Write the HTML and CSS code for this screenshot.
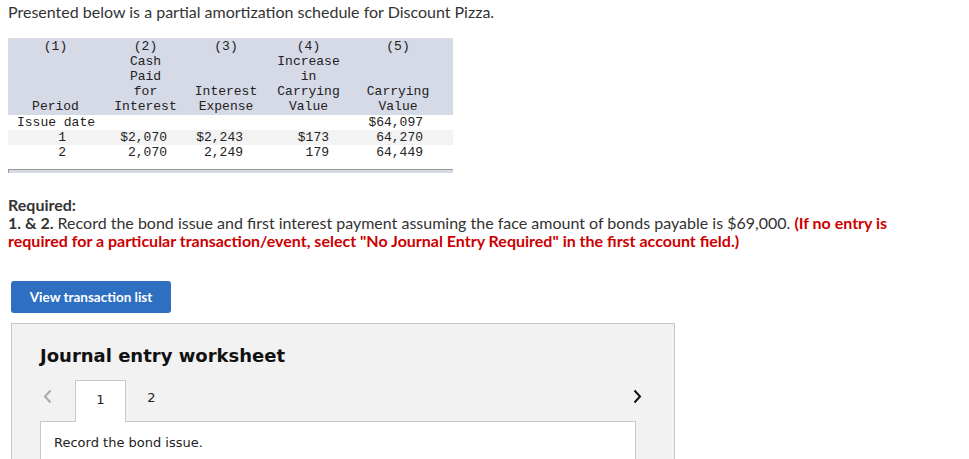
FILE: index.html
```html
<!DOCTYPE html>
<html>
<head>
<meta charset="utf-8">
<link rel="stylesheet" href="styles.css">
</head>
<body>
<p class="intro">Presented below is a partial amortization schedule for Discount Pizza.</p>
<div class="sched">
<table class="amort">
<colgroup><col class="c1"><col class="c2"><col class="c3"><col class="c4"><col class="c5"><col class="c6"></colgroup>
<thead>
<tr><th>(1)<br><br><br><br>Period</th><th>(2)<br>Cash<br>Paid<br>for<br>Interest</th><th>(3)<br><br><br>Interest<br>Expense</th><th>(4)<br>Increase<br>in<br>Carrying<br>Value</th><th>(5)<br><br><br>Carrying<br>Value</th><th></th></tr>
</thead>
<tbody>
<tr><td class="lbl">Issue date</td><td class="n2"></td><td class="n3"></td><td class="n4"></td><td class="n5">$64,097</td><td></td></tr>
<tr class="alt"><td class="per">1</td><td class="n2">$2,070</td><td class="n3">$2,243</td><td class="n4">$173</td><td class="n5">64,270</td><td></td></tr>
<tr><td class="per">2</td><td class="n2">2,070</td><td class="n3">2,249</td><td class="n4">179</td><td class="n5">64,449</td><td></td></tr>
</tbody>
</table>
<div class="sched-foot"></div>
</div>
<div class="required">
<div class="req-title">Required:</div>
<div><b>1. &amp; 2.</b> Record the bond issue and first interest payment assuming the face amount of bonds payable is $69,000. <span class="red">(If no entry is required for a particular transaction/event, select "No Journal Entry Required" in the first account field.)</span></div>
</div>
<button class="btn">View transaction list</button>
<div class="worksheet">
<h2 class="ws-title">Journal entry worksheet</h2>
<div class="nav">
<span class="arrow prev"><svg width="9" height="15" viewBox="0 0 9 15"><path d="M7.5 1.5 L2 7.5 L7.5 13.5" fill="none" stroke="#a9a9a9" stroke-width="2"/></svg></span>
<div class="tabs"><span class="tab active">1</span><span class="tab">2</span></div>
<span class="arrow next"><svg width="9" height="15" viewBox="0 0 9 15"><path d="M1.5 1.5 L7 7.5 L1.5 13.5" fill="none" stroke="#111" stroke-width="2"/></svg></span>
</div>
<div class="panel">Record the bond issue.</div>
</div>
</body>
</html>
```
FILE: styles.css
```css
html, body { margin: 0; padding: 0; background: #fff; }
body { padding: 0 8px; font-family: Lato, "Liberation Sans", sans-serif; color: #222; overflow: hidden; height: 459px; }
.intro { margin: 0; padding-top: 2px; font-size: 16px; line-height: 20px; color: #333; }
.sched { width: 445px; margin-top: 16px; border-top: 1px solid #dcdde3; }
.amort { border-collapse: collapse; width: 445px; table-layout: fixed; font-family: "Liberation Mono", monospace; font-size: 13px; line-height: 15px; color: #222; }
.c1 { width: 95px; } .c2 { width: 85px; } .c3 { width: 76px; } .c4 { width: 89px; } .c5 { width: 90px; } .c6 { width: 10px; }
.amort th { background: #d6d9e6; font-weight: normal; text-align: center; vertical-align: bottom; padding: 0 0 1px; }
.amort td { padding: 0; height: 15px; white-space: nowrap; }
.amort tr.alt td { background: #f3f3f3; }
.lbl { padding-left: 9px !important; text-align: left; }
.per { text-align: right; padding-right: 37px !important; }
.n2, .n3 { text-align: right; padding-right: 21px !important; }
.n4 { text-align: right; padding-right: 24px !important; }
.n5 { text-align: right; padding-right: 20px !important; }
.sched-foot { margin-top: 9px; height: 3px; border-top: 1px solid #999; border-left: 1px solid #999; background: #d6d9e6; }
.required { margin-top: 23px; max-width: 892px; font-size: 16px; line-height: 18px; color: #333; }
.req-title { font-weight: bold; }
.required b { font-weight: bold; }
.red { color: #c00; font-weight: bold; }
.btn { display: block; margin: 31px 0 0 3px; width: 160px; height: 32px; border: none; border-radius: 3px; background: #2e6fc1; color: #fff; font-family: Lato, "Liberation Sans", sans-serif; font-weight: bold; font-size: 13.5px; padding: 0; }
.worksheet { margin: 10px 0 0 3px; width: 664px; height: 200px; background: #f2f2f2; border: 1px solid #c9c9c9; box-sizing: border-box; padding: 20px 0 0 28px; }
.ws-title { margin: 0; font-family: "DejaVu Sans", sans-serif; font-weight: bold; font-size: 18px; line-height: 24px; color: #111; }
.nav { display: flex; align-items: flex-end; width: 605px; margin-top: 12px; height: 41px; }
.arrow { display: flex; align-items: center; height: 41px; padding-bottom: 8px; box-sizing: border-box; }
.prev { width: 35px; padding-left: 3px; }
.next { margin-left: auto; padding-right: 3px; }
.tabs { display: flex; height: 41px; }
.tab { width: 51px; height: 41px; box-sizing: border-box; display: flex; align-items: center; justify-content: center; padding-bottom: 6px; font-family: "DejaVu Sans", sans-serif; font-size: 13px; color: #222; }
.tab.active { background: #fff; border: 1px solid #c9c9c9; border-bottom: none; position: relative; z-index: 1; height: 42px; margin-bottom: -1px; padding-bottom: 5px; }
.panel { width: 596px; height: 60px; background: #fff; border: 1px solid #c9c9c9; box-sizing: border-box; padding: 13px 0 0 13px; font-family: "DejaVu Sans", sans-serif; font-size: 13px; line-height: 16px; color: #222; }
```
